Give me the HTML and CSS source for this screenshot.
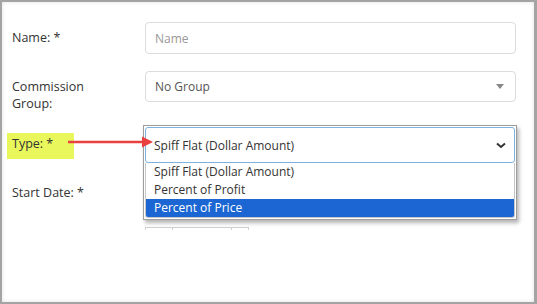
FILE: index.html
```html
<!DOCTYPE html>
<html lang="en">
  <head>
    <meta charset="UTF-8" />
    <meta name="viewport" content="width=device-width, initial-scale=1.0" />
    <title>Commission</title>
    <link rel="stylesheet" href="styles.css">
  </head>
  <body>
    <div class="frame">
      <form class="form">
        <div class="row row-name">
          <label class="label">Name: *</label>
          <input class="input" type="text" placeholder="Name" />
        </div>

        <div class="row row-group">
          <label class="label">Commission<br />Group:</label>
          <div class="input select">
            <span>No Group</span>
            <span class="caret"></span>
          </div>
        </div>

        <div class="row row-type">
          <label class="label"><span class="mark">Type: *</span></label>
          <div class="type-cell">
            <div class="pick">
              <div class="pick-select">
                <span>Spiff Flat (Dollar Amount)</span>
                <svg class="chevron" width="10" height="7" viewBox="0 0 10 7">
                  <path d="M1 1.5 L5 5 L9 1.5" fill="none" stroke="#333" stroke-width="2" />
                </svg>
              </div>
              <ul class="options">
                <li class="option">Spiff Flat (Dollar Amount)</li>
                <li class="option">Percent of Profit</li>
                <li class="option active">Percent of Price</li>
              </ul>
            </div>
          </div>
          <svg class="arrow" width="86" height="14" viewBox="0 0 86 14">
            <path d="M0 7 L76 7" stroke="#e8413f" stroke-width="2.5" />
            <path d="M74 1.5 L85 7 L74 12.5 Z" fill="#e8413f" />
          </svg>
        </div>

        <div class="row row-date">
          <label class="label">Start Date: *</label>
          <div></div>
        </div>

        <div class="date-strip">
          <span class="seg seg-a"></span>
          <span class="seg seg-b"></span>
          <span class="seg seg-c"></span>
        </div>
      </form>
    </div>
  </body>
</html>
```

FILE: styles.css
```css
* {
  box-sizing: border-box;
}

body {
  margin: 0;
  background: #fff;
  font-family: "Open Sans", "Noto Sans", sans-serif;
}

.frame {
  width: 537px;
  height: 304px;
  border: 2px solid #a4a4a4;
  border-right-width: 3px;
  box-shadow: inset 0 0 4px rgba(0, 0, 0, 0.12);
  overflow: hidden;
}

.form {
  padding: 20px 0 0 10px;
}

.row {
  position: relative;
  display: grid;
  grid-template-columns: 133px 371px;
  align-items: start;
}

.label {
  padding-top: 7px;
  font-size: 12.5px;
  line-height: 17px;
  color: #333;
}

.input {
  display: block;
  width: 100%;
  height: 32px;
  margin: 0;
  padding: 0 9px;
  border: 1px solid #dcdcdc;
  border-radius: 4px;
  font-family: inherit;
  font-size: 12px;
  color: #555;
  background: #fff;
  outline: none;
}
.input::placeholder {
  color: #999;
}

.row-name {
  margin-bottom: 17px;
}

.row-group {
  margin-bottom: 13px;
}
.select {
  height: 31px;
  display: flex;
  align-items: center;
  justify-content: space-between;
  padding-right: 11px;
}
.caret {
  width: 0;
  height: 0;
  border-left: 4px solid transparent;
  border-right: 4px solid transparent;
  border-top: 5px solid #888;
}

.row-type {
  margin-bottom: 15px;
}
.row-type .label {
  padding-top: 10px;
}
.mark {
  display: inline-block;
  margin: -2px 0 0 -5px;
  padding: 2px 21px 7px 5px;
  background: #e9f65c;
}
.type-cell {
  position: relative;
  height: 37px;
}
.pick {
  position: absolute;
  top: 0;
  left: -2px;
  width: 374px;
  padding: 1px;
  border: 1px solid #9d9d9d;
  background: #fff;
  box-shadow: 2px 3px 4px rgba(0, 0, 0, 0.3);
  z-index: 2;
}
.pick-select {
  display: flex;
  align-items: center;
  justify-content: space-between;
  height: 36px;
  padding: 0 8px 0 8px;
  border: 1px solid #7eb0e0;
  border-radius: 3px;
  font-size: 12px;
  color: #333;
}
.chevron {
  margin-top: 1px;
}
.options {
  margin: 0;
  padding: 0;
  list-style: none;
  border: 1px solid #c6c6c6;
  border-top: none;
  border-radius: 0 0 3px 3px;
  overflow: hidden;
}
.option {
  height: 18px;
  padding-left: 8px;
  font-size: 12px;
  line-height: 18px;
  color: #333;
}
.option.active {
  background: #1b66d2;
  color: #fff;
}

.arrow {
  position: absolute;
  left: 56px;
  top: 10px;
  z-index: 3;
}

.date-strip {
  display: flex;
  margin: 26px 0 0 133px;
  height: 3px;
}
.seg {
  height: 3px;
  border: 1px solid #cfcfcf;
  border-bottom: none;
}
.seg-a {
  width: 28px;
}
.seg-b {
  width: 59px;
  border-left: none;
}
.seg-c {
  width: 17px;
  border-left: none;
}
```
